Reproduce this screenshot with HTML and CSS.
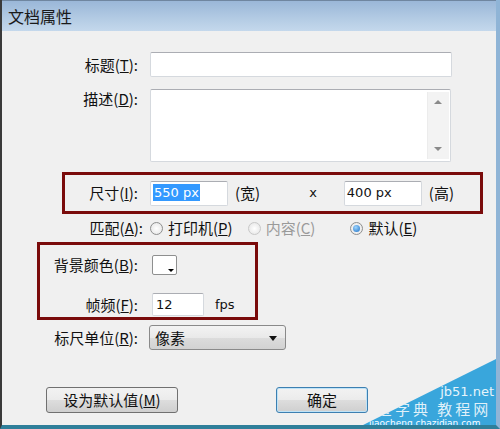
FILE: index.html
```html
<!DOCTYPE html>
<html lang="zh-CN">
<head>
    <meta charset="UTF-8">
    <title>文档属性</title>
    <link rel="stylesheet" href="styles.css">
</head>
<body>
    <div class="dialog">
        <div class="titlebar">文档属性</div>

        <div class="content">
            <!-- title -->
            <div class="row row-title">
                <span class="lab">标题(<u>T</u>):</span>
                <span class="field field-wide"></span>
            </div>

            <!-- description -->
            <div class="row row-desc">
                <span class="lab">描述(<u>D</u>):</span>
                <div class="field memo">
                    <div class="scroll">
                        <span class="arr up"></span>
                        <span class="arr down"></span>
                    </div>
                </div>
            </div>

            <!-- size, marked box -->
            <div class="mark mark-size">
                <div class="row">
                    <span class="lab">尺寸(<u>I</u>):</span>
                    <span class="field field-num"><span class="sel">550 px</span></span>
                    <span class="unit">(宽)</span>
                    <span class="times">x</span>
                    <span class="field field-num">400 px</span>
                    <span class="unit">(高)</span>
                </div>
            </div>

            <!-- match -->
            <div class="row row-match">
                <span class="lab">匹配(<u>A</u>):</span>
                <span class="opt opt-print"><span class="radio"></span>打印机(<u>P</u>)</span>
                <span class="opt opt-content off"><span class="radio"></span>内容(<u>C</u>)</span>
                <span class="opt opt-default"><span class="radio on"></span>默认(<u>E</u>)</span>
            </div>

            <!-- background + fps, marked box -->
            <div class="mark mark-bg">
                <div class="row row-color">
                    <span class="lab">背景颜色(<u>B</u>):</span>
                    <span class="swatch"><span class="tri"></span></span>
                </div>
                <div class="row row-fps">
                    <span class="lab">帧频(<u>F</u>):</span>
                    <span class="field field-fps">12</span>
                    <span class="fps">fps</span>
                </div>
            </div>

            <!-- ruler units -->
            <div class="row row-ruler">
                <span class="lab">标尺单位(<u>R</u>):</span>
                <span class="select">像素<span class="caret"></span></span>
            </div>

            <div class="buttons">
                <button class="btn btn-default">设为默认值(<u>M</u>)</button>
                <button class="btn btn-ok">确定</button>
            </div>
        </div>

        <!-- site watermark in the corner -->
        <div class="watermark">
            <span class="wm-site">jb51.net</span>
            <span class="wm-name">查字典 教程网</span>
            <span class="wm-url">jiaocheng.chazidian.com</span>
        </div>
    </div>
</body>
</html>
```

FILE: styles.css
```css
body {
    margin: 0;
    background: #f0f0f0;
    font-family: "Noto Sans CJK SC", "Liberation Sans", sans-serif;
    color: #111;
}

.dialog {
    position: relative;
    width: 500px;
    height: 429px;
    box-sizing: border-box;
    border-left: 2px solid #3a3a3a;
    border-right: 4px solid #8fb4d6;
    border-bottom: 4px solid #2f7f9a;
    background: #f0f0f0;
    overflow: hidden;
}

.titlebar {
    height: 31px;
    box-sizing: border-box;
    border-top: 1px solid #6f86a0;
    background: linear-gradient(#9ab7d8, #b8cfe6 70%, #c4d8ec);
    padding-left: 6px;
    font-size: 16px;
    line-height: 30px;
    color: #1a1a1a;
}

.content {
    padding-top: 21px;
}

.row {
    display: flex;
    align-items: center;
    font-size: 15px;
    line-height: 20px;
}

.lab {
    width: 136px;
    text-align: right;
    margin-right: 12px;
    flex-shrink: 0;
}

u {
    text-decoration: underline;
    text-underline-offset: 1px;
}

.field {
    display: inline-block;
    box-sizing: border-box;
    height: 25px;
    background: #fff;
    border: 1px solid #d5d9de;
    border-top-color: #abadb3;
    border-radius: 2px;
    font-family: "DejaVu Sans", sans-serif;
    font-size: 13px;
    line-height: 22px;
    padding-left: 2px;
}

.field-wide {
    width: 302px;
}

/* description */
.row-desc {
    margin-top: 12px;
    align-items: flex-start;
}

.memo {
    width: 301px;
    height: 73px;
    position: relative;
}

.scroll {
    position: absolute;
    right: 1px;
    top: 2px;
    bottom: 2px;
    width: 21px;
    background: #f3f3f3;
    border-left: 1px solid #ececec;
}

.arr {
    position: absolute;
    left: 6px;
    width: 0;
    height: 0;
    border-left: 4px solid transparent;
    border-right: 4px solid transparent;
}

.arr.up {
    top: 8px;
    border-bottom: 4px solid #8a8a8a;
}

.arr.down {
    bottom: 8px;
    border-top: 4px solid #8a8a8a;
}

/* red marker boxes */
.mark {
    border: 3px solid #7a0b0b;
    box-sizing: border-box;
}

.mark-size {
    margin: 10px 0 0 60px;
    width: 421px;
    height: 42px;
    display: flex;
    align-items: center;
}

.mark-size .lab {
    width: 73px;
}

.field-num {
    width: 78px;
    padding-left: 2px;
}

.sel {
    background: #3399ff;
    color: #fff;
    padding: 1px 1px;
}

.unit {
    margin-left: 7px;
}

.times {
    font-family: "DejaVu Sans", sans-serif;
    font-size: 13px;
    margin: 0 27px 0 49px;
}

/* match */
.row-match {
    height: 28px;
}

.row-match .lab {
    width: 141px;
    margin-right: 7px;
}

.opt {
    display: inline-flex;
    align-items: center;
}

.opt-content {
    margin-left: 15px;
}

.opt-default {
    margin-left: 35px;
}

.opt.off {
    color: #9a9a9a;
}

.radio {
    width: 11px;
    height: 11px;
    border: 1px solid #8e8f8f;
    border-radius: 50%;
    background: radial-gradient(#ffffff, #e3e3e3);
    margin-right: 5px;
    position: relative;
}

.opt.off .radio {
    border-color: #c8c8c8;
}

.radio.on::after {
    content: "";
    position: absolute;
    left: 2px;
    top: 2px;
    width: 7px;
    height: 7px;
    border-radius: 50%;
    background: radial-gradient(circle at 40% 35%, #9fd6ff, #1c6fc4);
}

/* background & fps */
.mark-bg {
    margin-left: 35px;
    width: 221px;
    height: 78px;
    padding-top: 10px;
}

.mark-bg .lab {
    width: 98px;
    margin-right: 14px;
}

.swatch {
    display: inline-block;
    width: 25px;
    height: 20px;
    box-sizing: border-box;
    background: #fff;
    border: 1px solid #8e8f8f;
    border-radius: 2px;
    position: relative;
}

.tri {
    position: absolute;
    right: 2px;
    bottom: 2px;
    width: 0;
    height: 0;
    border-left: 3px solid transparent;
    border-right: 3px solid transparent;
    border-top: 3px solid #000;
}

.row-fps {
    margin-top: 18px;
}

.field-fps {
    width: 52px;
    height: 23px;
    padding-left: 3px;
    line-height: 21px;
}

.fps {
    font-family: "DejaVu Sans", sans-serif;
    font-size: 13px;
    margin-left: 11px;
}

/* ruler */
.row-ruler {
    margin-top: 5px;
}

.row-ruler .lab {
    margin-right: 11px;
}

.select {
    position: relative;
    display: inline-block;
    box-sizing: border-box;
    width: 137px;
    height: 25px;
    border: 1px solid #8a8a8a;
    border-radius: 3px;
    background: linear-gradient(#f3f3f3, #e9e9e9 50%, #dcdcdc 51%, #d2d2d2);
    padding-left: 5px;
    line-height: 23px;
}

.caret {
    position: absolute;
    right: 8px;
    top: 10px;
    width: 0;
    height: 0;
    border-left: 4px solid transparent;
    border-right: 4px solid transparent;
    border-top: 5px solid #111;
}

/* buttons */
.buttons {
    display: flex;
    margin-top: 37px;
    padding-left: 44px;
}

.btn {
    height: 26px;
    border: 1px solid #707070;
    border-radius: 3px;
    background: linear-gradient(#f2f2f2, #ebebeb 50%, #dddddd 51%, #cfcfcf);
    font-family: "Noto Sans CJK SC", sans-serif;
    font-size: 15px;
    line-height: 22px;
    color: #111;
    padding: 0;
}

.btn-default {
    width: 132px;
}

.btn-ok {
    width: 92px;
    margin-left: 98px;
    border-color: #3c7fb1;
    box-shadow: inset 0 0 0 1px #bfe3f7;
}

/* watermark overlay */
.watermark {
    position: absolute;
    right: -4px;
    bottom: -4px;
    width: 145px;
    height: 72px;
    background: #39a6dc;
    clip-path: polygon(100% 0, 100% 100%, 0 100%);
    color: #fff;
}

.watermark span {
    position: absolute;
    line-height: 1;
    white-space: nowrap;
}

.wm-site {
    right: 6px;
    top: 28px;
    font-family: "DejaVu Sans", sans-serif;
    font-size: 13px;
    color: #e6f4fb;
}

.wm-name {
    left: 22px;
    top: 44px;
    font-size: 15px;
    letter-spacing: 3px;
    color: rgba(255, 255, 255, 0.85);
}

.wm-url {
    left: 14px;
    top: 62px;
    font-family: "DejaVu Sans", sans-serif;
    font-size: 9px;
    color: #fff;
}
```
